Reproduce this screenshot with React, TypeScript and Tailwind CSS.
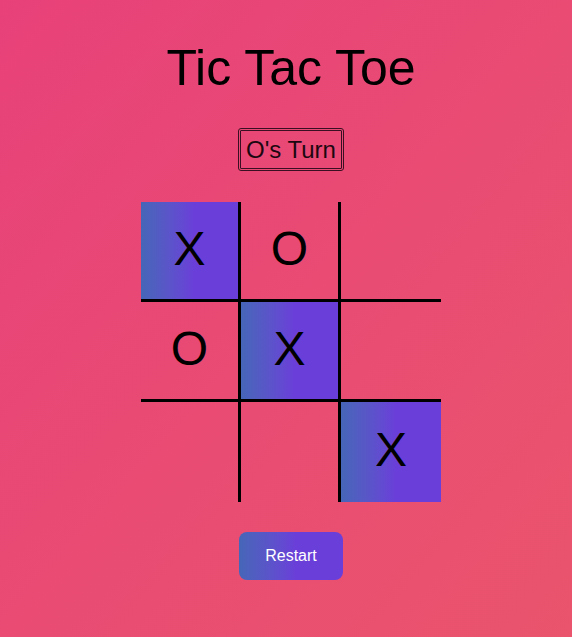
const board = ['X', 'O', '', 'O', 'X', '', '', '', 'X']
const winning = [0, 4, 8]

export default function App() {
  return (
    <div className="min-h-[637px] bg-linear-to-br from-[#e8417a] to-[#ea546c] font-['Liberation_Sans',Arial,sans-serif] flex flex-col items-center pt-[40px] pl-[10px]">
      <h1 className="text-[50px] leading-[1.15] text-black">Tic Tac Toe</h1>

      <div className="mt-[30px] border-[3px] border-double border-[#3a0f22] rounded-[3px] px-[5px] py-[5px] text-[24px] leading-[1.15] text-[#1c0710]">
        O's Turn
      </div>

      <div className="mt-[31px] grid grid-cols-[100px_100px_100px] grid-rows-[100px_100px_100px]">
        {board.map((v, i) => {
          const col = i % 3
          const row = Math.floor(i / 3)
          return (
            <div
              key={i}
              className={[
                'flex items-center justify-center pb-[4px] text-[48px] text-black',
                col < 2 ? 'border-r-[3px] border-black' : '',
                row < 2 ? 'border-b-[3px] border-black' : '',
                winning.includes(i) ? 'bg-linear-to-r from-[#4566b8] to-[#6a3ed9] to-55%' : '',
              ].join(' ')}
            >
              {v}
            </div>
          )
        })}
      </div>

      <button className="mt-[30px] h-[48px] px-[26px] rounded-lg bg-linear-to-r from-[#4566b8] to-[#6a3ed9] to-55% text-white text-base">
        Restart
      </button>
    </div>
  )
}
